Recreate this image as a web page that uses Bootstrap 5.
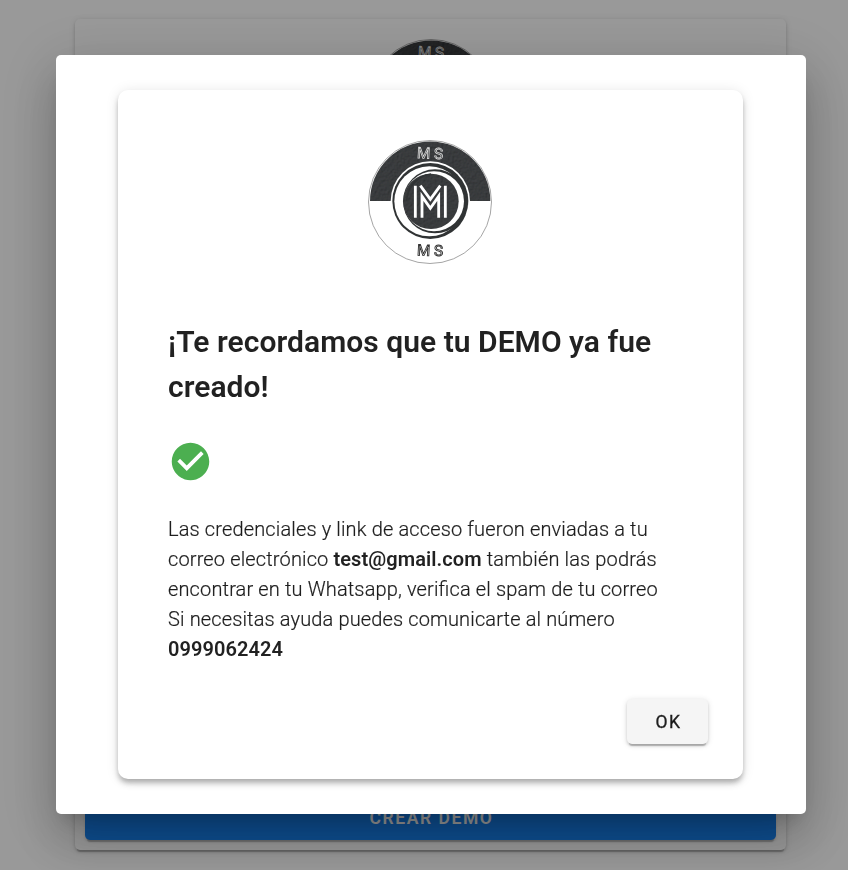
<!DOCTYPE html>
<html lang="es">
<head>
<meta charset="utf-8">
<meta name="viewport" content="width=device-width, initial-scale=1">
<title>Crear demo</title>
<link href="https://cdn.jsdelivr.net/npm/bootstrap@5.3.0/dist/css/bootstrap.min.css" rel="stylesheet">
<style>
body{font-family:Roboto,"Liberation Sans",sans-serif;color:rgba(0,0,0,.87);background:#fff;height:870px;overflow:hidden}
.demo-page{padding:19px 62px 20px 75px;height:870px}
.demo-form{border:0;border-radius:5px;padding:20px 10px 10px;box-shadow:0 4px 1px -2px rgba(0,0,0,.2),0 2px 3px rgba(0,0,0,.14),0 1px 6px rgba(0,0,0,.12)}
.demo-submit{--bs-btn-bg:#1682f2;--bs-btn-color:#fff;height:45px;border:0;border-radius:5px;font-weight:600;font-size:17.5px;letter-spacing:.0893em;padding:1px 0 0 2px;line-height:45px;box-shadow:0 4px 1px -2px rgba(0,0,0,.2),0 2px 3px rgba(0,0,0,.14)}
.ms-logo{width:124px;height:124px;display:block}
.ms-logo text{font-family:Roboto,"Liberation Sans",sans-serif;font-weight:700}
.scrim{background:rgba(0,0,0,.4);padding:55px 42px 56px 56px}
.notice-dialog{border-radius:5px;padding:35px 63px 35px 62px;box-shadow:0 14px 19px -9px rgba(0,0,0,.2),0 30px 48px 4px rgba(0,0,0,.14),0 11px 58px 10px rgba(0,0,0,.12)}
.notice-card{border:0;border-radius:10px;padding:50px 35px 35px 50px;color:inherit;box-shadow:0 4px 5px -1px rgba(0,0,0,.2),0 5px 6px rgba(0,0,0,.12),0 1px 13px rgba(0,0,0,.1)}
.notice-card .ms-logo{margin-left:200px}
.notice-title{font-size:30px;font-weight:600;line-height:45px;margin:55px 0 0;letter-spacing:.04px}
.ok-mark{width:45px;height:45px;margin:29.5px 0 30.5px}
.notice-text{font-size:20px;font-weight:300;line-height:30px;margin:0;white-space:nowrap;letter-spacing:.14px;font-feature-settings:"liga" 1;-webkit-text-stroke:.2px}
.notice-text strong{font-weight:600;letter-spacing:.08px;-webkit-text-stroke:0}
.btn-ok{--bs-btn-bg:#f5f5f5;--bs-btn-color:rgba(0,0,0,.87);width:81px;height:45px;padding:1px 0 0 2px;border:0;border-radius:5px;font-weight:400;-webkit-text-stroke:.3px;font-size:17.5px;letter-spacing:.0893em;box-shadow:0 4px 1px -2px rgba(0,0,0,.2),0 2px 3px rgba(0,0,0,.14),0 1px 6px rgba(0,0,0,.12)}
</style>
</head>
<body>
<svg width="0" height="0" class="position-absolute" aria-hidden="true">
  <defs>
    <filter id="leather" x="0" y="0" width="1" height="1">
      <feTurbulence type="fractalNoise" baseFrequency=".15" numOctaves="3" result="n"/>
      <feDiffuseLighting in="n" lighting-color="#3f4344" surfaceScale="2.2" result="l"><feDistantLight azimuth="230" elevation="52"/></feDiffuseLighting>
      <feComposite in="l" in2="SourceGraphic" operator="in"/>
    </filter>
    <symbol id="ms" viewBox="24 30 372 372">
      <circle cx="210" cy="216" r="184.500" fill="#fff" stroke="#777" stroke-width="2"/>
      <path d="M30 213a180 178 0 0 1 361 0z" fill="#333" filter="url(#leather)"/>
      <circle cx="211" cy="213" r="119" fill="#fff"/>
      <circle cx="211" cy="213" r="114" fill="#303334"/>
      <circle cx="208" cy="214" r="105" fill="#fff"/>
      <circle cx="225" cy="214" r="96" fill="#303334"/>
      <circle cx="222" cy="214" r="90" fill="#fff"/>
      <circle cx="213" cy="214" r="83" fill="#333" filter="url(#leather)"/>
      <path d="M140 214A84 84 0 0 1 213 132" fill="none" stroke="#303334" stroke-width="5"/>
      <g fill="none" stroke="#fff" stroke-width="8.500"><path d="M166 167V263M256 167V263M181 167L211 208L241 167M186 263V199L211 235L236 199V263"/></g>
      <g fill="#303334" stroke="#ddd" stroke-width="2.300" font-size="46"><text x="171" y="85" textLength="40" lengthAdjust="spacingAndGlyphs" transform="rotate(3 190 70)">M</text><text x="222" y="86">S</text></g>
      <g fill="#fff" stroke="#333" stroke-width="2.800" font-size="46"><text x="171" y="377" textLength="40" lengthAdjust="spacingAndGlyphs" transform="rotate(3 190 362)">M</text><text x="222" y="378">S</text></g>
    </symbol>
  </defs>
</svg>
<main class="demo-page">
  <div class="card demo-form h-100 d-flex flex-column align-items-center justify-content-between">
    <svg class="ms-logo"><use href="#ms"/></svg>
    <button class="btn demo-submit w-100" type="button">CREAR DEMO</button>
  </div>
</main>
<div class="scrim position-fixed top-0 start-0 w-100 h-100">
  <div class="notice-dialog bg-white h-100" role="dialog" aria-modal="true">
    <div class="card notice-card h-100">
      <svg class="ms-logo flex-shrink-0"><use href="#ms"/></svg>
      <h1 class="notice-title">¡Te recordamos que tu DEMO ya fue<br>creado!</h1>
      <svg class="ok-mark flex-shrink-0" viewBox="0 0 24 24"><path fill="#4caf50" d="M12 2C6.500 2 2 6.500 2 12S6.500 22 12 22 22 17.500 22 12 17.500 2 12 2M10 17L5 12L6.410 10.590L10 14.170L17.590 6.580L19 8L10 17Z"/></svg>
      <p class="notice-text">Las credenciales y link de acceso fueron enviadas a tu<br>correo electrónico <strong>test@gmail.com</strong> también las podrás<br>encontrar en tu Whatsapp, verifica el spam de tu correo<br>Si necesitas ayuda puedes comunicarte al número<br><strong>0999062424</strong></p>
      <button class="btn btn-ok align-self-end mt-auto" type="button">OK</button>
    </div>
  </div>
</div>
<script src="https://cdn.jsdelivr.net/npm/bootstrap@5.3.0/dist/js/bootstrap.bundle.min.js"></script>
</body>
</html>
